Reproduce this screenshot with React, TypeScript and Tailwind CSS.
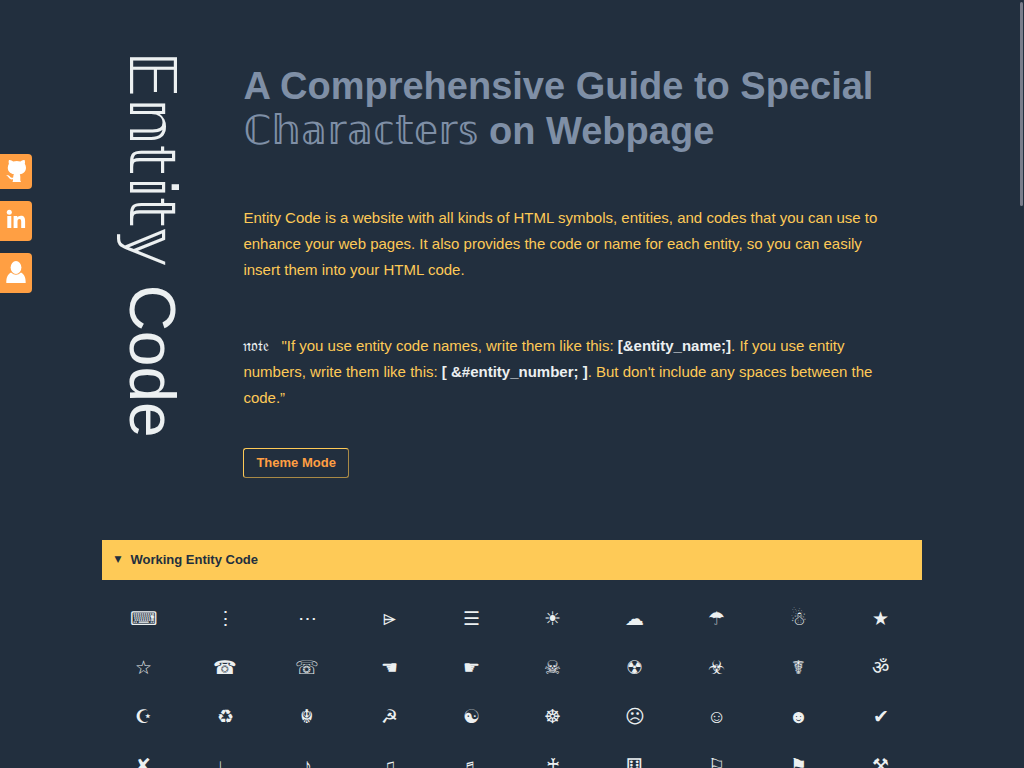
const symbols = [
  "⌨", "⋮", "⋯", "⌲", "☰", "☀", "☁", "☂", "☃", "★",
  "☆", "☎", "☏", "☚", "☛", "☠", "☢", "☣", "☤", "ॐ",
  "☪", "♻", "☬", "☭", "☯", "☸", "☹", "☺", "☻", "✔",
  "✘", "♩", "♪", "♫", "♬", "♰", "⚅", "⚐", "⚑", "⚒",
];

function GithubIcon() {
  return (
    <svg viewBox="0 0 20 24" className="h-6 w-5" fill="currentColor" aria-hidden="true">
      <path d="M3 1C4.500.6 6 1.500 7.200 2.400Q10.800 1.600 14.400 2.400C15.600 1.500 17.200.6 18.600 1Q19.300 3 18.800 4.800C21.300 8.500 20 14.300 13.800 15.200Q14.300 16.200 14.300 18V21.500L15 23H6.500L7 21.500V20.300C4.700 20.600 3.600 20 2.700 18.600Q1.800 17.300.2 16.600C1.900 15.900 3.300 16.700 4.300 18Q5.300 19 7.200 18.400Q7.200 16.300 8 15.200C1.600 14.300.600 8.500 2.900 4.800Q2.300 3 3 1Z" />
    </svg>
  );
}

function LinkedinIcon() {
  return (
    <svg viewBox="0 0 20 20" className="size-5" fill="currentColor" aria-hidden="true">
      <circle cx="3.3" cy="3.3" r="2.5" />
      <path d="M1.300 7H5.300V19H1.300ZM7.600 7H11.300V8.600C12 7.400 13.200 6.700 14.900 6.700C18.200 6.700 19.100 8.700 19.100 12V19H15.200V12.800C15.200 11.200 14.900 10 13.500 10C12 10 11.500 11.100 11.500 12.700V19H7.600Z" />
    </svg>
  );
}

function PersonIcon() {
  return (
    <svg viewBox="0 0 20 24" className="h-6 w-5" fill="currentColor" aria-hidden="true">
      <ellipse cx="10" cy="7.5" rx="5.4" ry="6.5" />
      <path d="M5 12.500Q10 17 15 12.500C18.500 14.500 19.700 17.500 19.700 23H.3C.3 17.500 1.500 14.500 5 12.500Z" />
    </svg>
  );
}

const socials = [
  { label: "GitHub", icon: <GithubIcon />, size: "h-[35px] pb-0.5" },
  { label: "LinkedIn", icon: <LinkedinIcon />, size: "h-10 pb-1" },
  { label: "Portfolio", icon: <PersonIcon />, size: "h-10 pb-0.5" },
];

export default function App() {
  return (
    <div className="h-screen overflow-hidden bg-[#222f3e] font-['Liberation_Sans',Arial,sans-serif] text-[#ecf0f1]">
      <nav className="fixed top-[154px] left-0 flex w-8 flex-col gap-3 text-white">
        {socials.map((s) => (
          <a
            key={s.label}
            href="#"
            aria-label={s.label}
            className={`flex items-center justify-center rounded-r bg-[#ff9f43] ${s.size}`}
          >
            {s.icon}
          </a>
        ))}
      </nav>

      <main className="mx-auto w-4/5">
        <header className="flex items-start">
          <div className="w-[141px] shrink-0 pt-[51px] pl-[14px]">
            <h1 className="text-[64px] leading-[72px] whitespace-nowrap [writing-mode:vertical-rl]">
              <span className="font-['DejaVu_Sans',sans-serif]">𝔼𝕟𝕥𝕚𝕥𝕪</span> Code
            </h1>
          </div>
          <div className="flex-1 pt-16 pr-6">
            <h2 className="text-[38px] leading-[45px] font-bold text-[#7f8fa6]">
              A Comprehensive Guide to Special{" "}
              <span className="font-['DejaVu_Sans',sans-serif] text-[40px] leading-none font-normal">ℂ𝕙𝕒𝕣𝕒𝕔𝕥𝕖𝕣𝕤</span> on Webpage
            </h2>
            <p className="mt-[51px] text-[15px] leading-[26px] text-[#feca57]">
              Entity Code is a website with all kinds of HTML symbols, entities, and codes that you can use to
              enhance your web pages. It also provides the code or name for each entity, so you can easily insert
              them into your HTML code.
            </p>
            <p className="mt-[50px] text-[15px] leading-[26px] text-[#feca57]">
              <span className="mr-3 font-['DejaVu_Sans',sans-serif] text-base leading-none text-[#ecf0f1]">𝔫𝔬𝔱𝔢</span>
              "If you use entity code names, write them like this:{" "}
              <b className="text-[#ecf0f1]">[&amp;entity_name;]</b>. If you use entity numbers, write them like
              this: <b className="text-[#ecf0f1]">[ &amp;#entity_number; ]</b>. But don't include any spaces
              between the code.”
            </p>
            <button
              type="button"
              className="mt-[37px] h-[30px] rounded-[3px] border border-[#feca57] border-r-[#a98a46] border-b-[#a98a46] px-3 text-[13px] font-bold text-[#ff9f43]"
            >
              Theme Mode
            </button>
          </div>
        </header>

        <details open className="mt-[62px]">
          <summary className="flex h-10 cursor-pointer list-none items-center gap-1 bg-[#feca57] px-3 text-[13px] font-bold text-[#222f3e]">
            <span className="w-3 font-['DejaVu_Sans',sans-serif] text-[9px]" aria-hidden="true">
              ▼
            </span>
            Working Entity Code
          </summary>
          <ul className="grid auto-rows-[49px] grid-cols-10 pt-[14px] text-center text-[19px] leading-[49px]">
            {symbols.map((s) => (
              <li key={s}>{s === "⌲" ? <b className="text-base leading-none">{s}</b> : s}</li>
            ))}
          </ul>
        </details>
      </main>

      <div className="fixed top-0.5 right-px h-[204px] w-[3px] rounded-full bg-[#7b7d8b]" aria-hidden="true" />
    </div>
  );
}
